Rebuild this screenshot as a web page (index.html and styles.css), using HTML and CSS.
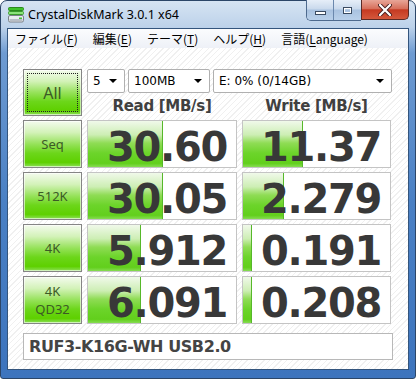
FILE: index.html
```html
<!DOCTYPE html>
<html lang="ja">
<head>
    <meta charset="UTF-8">
    <meta name="viewport" content="width=device-width, initial-scale=1.0">
    <title>CrystalDiskMark 3.0.1 x64</title>
    <link rel="stylesheet" href="styles.css">
</head>
<body>

    <div class="window">
        <div class="titlebar">
            <svg class="app-icon" width="16" height="16" viewBox="0 0 16 16">
                <rect x="0.5" y="0.5" width="15" height="3" rx="1" fill="#3ec22a" stroke="#2a8a1c"/>
                <rect x="0.5" y="4.5" width="15" height="3" rx="1" fill="#8be27a" stroke="#3a9a2c"/>
                <rect x="0.5" y="8.5" width="15" height="6.5" rx="1.5" fill="#e9ecef" stroke="#7a8088"/>
                <rect x="1.5" y="12" width="13" height="2" fill="#b8bec6"/>
                <rect x="11" y="10.5" width="3" height="1.5" fill="#46c23a"/>
            </svg>
            <span class="title">CrystalDiskMark 3.0.1 x64</span>
            <div class="caption-buttons">
                <div class="cap-group">
                    <span class="cap-btn cap-min"><i></i></span>
                    <span class="cap-btn cap-max"><i></i></span>
                </div>
                <span class="cap-btn cap-close">
                    <svg width="14" height="12" viewBox="0 0 14 12">
                        <path d="M2 1 L12 11 M12 1 L2 11" stroke="#4a2020" stroke-width="4" stroke-linecap="round"/>
                        <path d="M2 1 L12 11 M12 1 L2 11" stroke="#ffffff" stroke-width="2.2" stroke-linecap="round"/>
                    </svg>
                </span>
            </div>
        </div>

        <div class="client">
            <div class="menubar">
                <span class="menu-item">ファイル(<u>F</u>)</span>
                <span class="menu-item">編集(<u>E</u>)</span>
                <span class="menu-item">テーマ(<u>T</u>)</span>
                <span class="menu-item">ヘルプ(<u>H</u>)</span>
                <span class="menu-item">言語(<u>L</u>anguage)</span>
            </div>

            <div class="content">
                <div class="bench">
                    <div class="test-btn all-btn"><span>All</span></div>
                    <div class="selectors">
                        <div class="combo combo-count">5</div>
                        <div class="combo combo-size">100MB</div>
                        <div class="combo combo-drive">E: 0% (0/14GB)</div>
                    </div>
                    <div class="col-head">Read [MB/s]</div>
                    <div class="col-head">Write [MB/s]</div>

                    <div class="test-btn">Seq</div>
                    <div class="meter" style="--fill: 51%">30.60</div>
                    <div class="meter" style="--fill: 41%">11.37</div>

                    <div class="test-btn">512K</div>
                    <div class="meter" style="--fill: 51%">30.05</div>
                    <div class="meter" style="--fill: 28%">2.279</div>

                    <div class="test-btn">4K</div>
                    <div class="meter" style="--fill: 36%">5.912</div>
                    <div class="meter" style="--fill: 6%">0.191</div>

                    <div class="test-btn">4K<br>QD32</div>
                    <div class="meter" style="--fill: 36%">6.091</div>
                    <div class="meter" style="--fill: 6%">0.208</div>
                </div>

                <div class="model">RUF3-K16G-WH USB2.0</div>
            </div>
        </div>
    </div>

</body>
</html>
```

FILE: styles.css
```css
html, body {
    margin: 0;
    padding: 0;
    overflow: hidden;
}

body {
    font-family: "DejaVu Sans", sans-serif;
    width: 416px;
    height: 379px;
}

/* cadre de la fenêtre (style Aero) */
.window {
    box-sizing: border-box;
    width: 416px;
    height: 379px;
    border: 1px solid #2c4668;
    border-radius: 7px 7px 3px 3px;
    background: linear-gradient(to bottom, #d6e4f3 0, #bdd2ea 26px, #6e9bd2 52px, #4a80c4 200px, #3d74bd 100%);
    display: flex;
    flex-direction: column;
}

.titlebar {
    height: 27px;
    display: flex;
    align-items: flex-start;
    padding-left: 7px;
}

.app-icon {
    margin-top: 6px;
    flex: none;
}

.title {
    margin-top: 5px;
    margin-left: 4px;
    font-family: "Noto Sans", sans-serif;
    font-size: 12.5px;
    color: #000;
}

.caption-buttons {
    margin-left: auto;
    margin-right: 6px;
    margin-top: -1px;
    display: flex;
}

.cap-group {
    display: flex;
    border: 1px solid #4e6a8e;
    border-top: none;
    border-right: none;
    border-radius: 0 0 0 5px;
    overflow: hidden;
}

.cap-btn {
    height: 20px;
    display: flex;
    align-items: center;
    justify-content: center;
    box-sizing: border-box;
}

.cap-min, .cap-max {
    width: 27px;
    background: linear-gradient(to bottom, #e6eef8 0, #c9d9ec 45%, #a9c2e0 50%, #b9d0ea 100%);
}

.cap-min {
    border-right: 1px solid #6b88ad;
}

.cap-min i {
    display: block;
    width: 9px;
    height: 2px;
    margin-top: 6px;
    background: #fff;
    border: 1px solid #3a4a60;
}

.cap-max i {
    display: block;
    width: 7px;
    height: 5px;
    border: 1px solid #3a4a60;
    outline: 1px solid #fff;
    outline-offset: -2px;
}

.cap-close {
    width: 48px;
    background: linear-gradient(to bottom, #e8a698 0, #d7705c 45%, #c53a22 52%, #d4583c 100%);
    border: 1px solid #5a2b26;
    border-top: none;
    border-radius: 0 0 5px 0;
}

/* zone cliente */
.client {
    flex: 1;
    margin: 0 6px 8px 6px;
    border: 1px solid #34557d;
    display: flex;
    flex-direction: column;
    background: repeating-linear-gradient(135deg, #ffffff 0, #ffffff 3px, #f0f0f0 3px, #f0f0f0 4px);
}

.menubar {
    height: 19px;
    display: flex;
    align-items: center;
    padding-left: 7px;
    gap: 15px;
    background: linear-gradient(to bottom, #fbfcfe, #eef1f7);
    font-family: "Noto Sans CJK JP", "Noto Sans", sans-serif;
    font-size: 12px;
    color: #000;
}

.menu-item u {
    text-decoration-thickness: 1px;
    text-underline-offset: 2px;
}

.content {
    padding: 21px 0 0 15px;
}

.bench {
    display: grid;
    grid-template-columns: 59px 150px 149px;
    grid-template-rows: 24px 19px 48px 48px 48px 48px;
    column-gap: 5px;
    row-gap: 4px;
}

.test-btn {
    box-sizing: border-box;
    border: 1px solid #858585;
    box-shadow: inset 0 0 0 1px rgba(255, 255, 255, 0.6);
    background: linear-gradient(to bottom, #f4fbee 0, #d3f2b8 25%, #96e25a 50%, #6cd61a 70%, #5ed000 90%, #8ee05a 100%);
    display: flex;
    align-items: center;
    justify-content: center;
    text-align: center;
    font-family: "Noto Sans", sans-serif;
    font-size: 13px;
    line-height: 18px;
    color: #3c5a26;
}

.all-btn {
    grid-row: 1 / span 2;
    font-size: 16px;
    padding: 3px;
}

.all-btn span {
    width: 100%;
    height: 100%;
    box-sizing: border-box;
    border: 1px dotted #202020;
    display: flex;
    align-items: center;
    justify-content: center;
}

.selectors {
    grid-column: 2 / span 2;
    display: flex;
    gap: 3px;
}

.combo {
    box-sizing: border-box;
    height: 24px;
    border: 1px solid #b0b0b0;
    border-radius: 2px;
    background: #fff;
    display: flex;
    align-items: center;
    justify-content: space-between;
    padding: 0 7px 0 5px;
    font-size: 12px;
    color: #000;
}

.combo::after {
    content: "";
    border-top: 4px solid #000;
    border-left: 4px solid transparent;
    border-right: 4px solid transparent;
}

.combo-count {
    width: 38px;
}

.combo-size {
    width: 82px;
}

.combo-drive {
    flex: 1;
    margin-right: -1px;
}

.col-head {
    text-align: center;
    font-weight: bold;
    font-size: 15px;
    line-height: 19px;
    letter-spacing: -0.3px;
    color: #404040;
}

.meter {
    box-sizing: border-box;
    border: 1px solid #c4c4c4;
    background:
        linear-gradient(to right, transparent calc(var(--fill) - 1px), #56b82a calc(var(--fill) - 1px), #56b82a var(--fill), transparent var(--fill)),
        linear-gradient(to bottom, #f0f9ea 0, #cdeeb4 30%, #8fdc55 48%, #6cd42a 70%, #62cf1c 92%, #86dc52 100%) no-repeat,
        #ffffff;
    background-size: 100% 100%, var(--fill) 100%, auto;
    text-align: right;
    padding: 6px 9px 0 0;
    font-weight: bold;
    font-size: 40px;
    letter-spacing: -1.3px;
    line-height: 40px;
    color: #383838;
}

.model {
    box-sizing: border-box;
    width: 370px;
    height: 27px;
    margin-top: 9px;
    border: 1px solid #b8b8b8;
    background: #fff;
    padding-left: 5px;
    font-weight: bold;
    font-size: 16px;
    letter-spacing: -0.4px;
    line-height: 25px;
    color: #444;
}
```
